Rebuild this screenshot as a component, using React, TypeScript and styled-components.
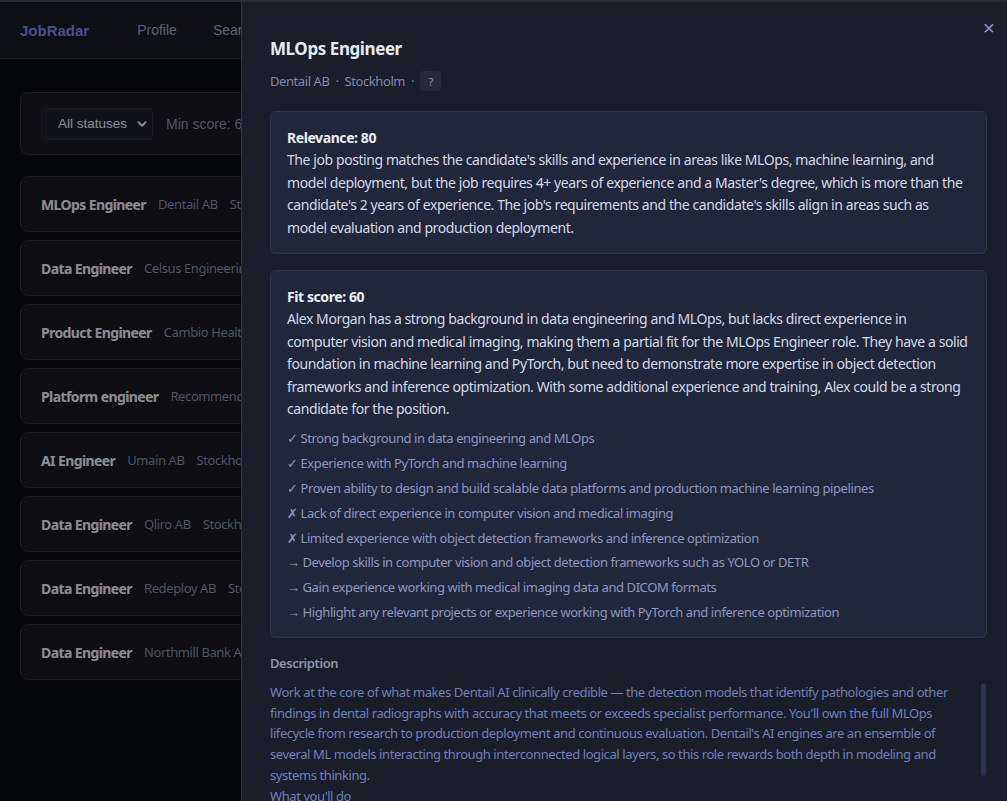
import { createGlobalStyle } from 'styled-components';
import styled from 'styled-components';

const GlobalStyle = createGlobalStyle`
	html {
		border-top: 2px solid #2b2c30;
	}
	body {
		margin: 0;
		background: #0b0c10;
		font-family: 'Noto Sans', 'Open Sans', sans-serif;
		overflow: hidden;
	}
	* {
		box-sizing: border-box;
	}
`;

const Page = styled.div`
	min-height: 799px;
	background: #0b0c10;
`;

const NavBar = styled.nav`
	display: flex;
	align-items: center;
	height: 57px;
	padding: 0 20px;
	background: #171922;
	border-bottom: 1px solid #2f3249;
	font-family: 'Liberation Sans', Arial, sans-serif;
`;

const Logo = styled.div`
	font-size: 15px;
	font-weight: 700;
	color: #7d84ea;
	margin-right: 48px;
`;

const NavLink = styled.a`
	font-size: 14px;
	color: #9aa0ca;
	margin-right: 36px;
`;

const Main = styled.main`
	padding: 33px 20px;
`;

const FilterBar = styled.div`
	display: flex;
	align-items: center;
	gap: 13px;
	height: 63px;
	padding: 0 20px;
	background: #16171f;
	border: 1px solid #2d3043;
	border-radius: 8px;
	margin-bottom: 21px;
	font-family: 'Liberation Sans', Arial, sans-serif;
`;

const Select = styled.div`
	display: flex;
	align-items: center;
	justify-content: space-between;
	width: 112px;
	height: 32px;
	padding: 0 3px 0 16px;
	background: #1c1f2a;
	border: 1px solid #282b3a;
	border-radius: 4px;
	font-size: 13.5px;
	color: #e4e8f5;
`;

const FilterLabel = styled.span`
	font-size: 14px;
	color: #858eb1;
	white-space: nowrap;
`;

const JobList = styled.div`
	display: flex;
	flex-direction: column;
	gap: 8px;
`;

const JobCard = styled.div`
	display: flex;
	align-items: center;
	gap: 12px;
	height: 56px;
	padding: 0 20px;
	background: #16171f;
	border: 1px solid #2a2c3e;
	border-radius: 8px;
	white-space: nowrap;
	letter-spacing: -0.4px;
`;

const JobTitle = styled.span`
	font-size: 14px;
	font-weight: 700;
	letter-spacing: -0.6px;
	color: #e8eaf5;
`;

const JobMeta = styled.span`
	font-size: 13px;
	color: #818cae;
`;

const Backdrop = styled.div`
	position: fixed;
	top: 2px;
	left: 0;
	right: 0;
	bottom: 0;
	background: rgba(0, 0, 0, 0.4);
`;

const Drawer = styled.aside`
	position: fixed;
	top: 2px;
	right: 0;
	bottom: 0;
	width: 766px;
	background: #1b1d2a;
	border-left: 1px solid #2d3256;
	padding: 36px 20px 0 28px;
	overflow: hidden;
	letter-spacing: -0.42px;
`;

const CloseButton = styled.button`
	position: absolute;
	top: 16px;
	right: 12px;
	background: none;
	border: none;
	padding: 0;
	font-size: 21px;
	line-height: 20px;
	color: #8c9ac4;
	cursor: pointer;
	font-family: 'Liberation Sans', Arial, sans-serif;
`;

const DrawerTitle = styled.h2`
	margin: 0;
	font-size: 17px;
	line-height: 22px;
	font-weight: 700;
	color: #e8eaf2;
`;

const Subtitle = styled.div`
	display: flex;
	align-items: center;
	gap: 6px;
	margin-top: 11px;
	font-size: 13px;
	color: #7d89b0;
`;

const Badge = styled.span`
	display: inline-flex;
	align-items: center;
	justify-content: center;
	width: 21px;
	height: 20px;
	border-radius: 4px;
	background: #262a38;
	font-size: 11px;
	color: #8a93b8;
`;

const Card = styled.section<{ $top: number }>`
	margin-top: ${(p) => p.$top}px;
	padding: 15px 16px 14px;
	background: #22263a;
	border: 1px solid #2e3350;
	border-radius: 6px;
	font-size: 14px;
	line-height: 22.4px;
	color: #d4d8e8;
`;

const CardHeading = styled.div`
	font-weight: 700;
	color: #eceef5;
`;

const Points = styled.ul`
	list-style: none;
	margin: 8px 0 0;
	padding: 0;
	font-size: 13px;
	line-height: 20.8px;
	color: #8c96c0;
`;

const Point = styled.li`
	margin-bottom: 4px;
	&:last-child {
		margin-bottom: 0;
	}
`;

const SectionTitle = styled.h3`
	margin: 14px 0 0;
	font-size: 13px;
	line-height: 22px;
	font-weight: 600;
	color: #8b93a8;
`;

const DescriptionBox = styled.div`
	position: relative;
	margin-top: 8px;
`;

const Description = styled.div`
	height: 220px;
	overflow: hidden;
	white-space: pre-wrap;
	font-size: 13px;
	line-height: 20.8px;
	color: #6e80ba;
	padding-right: 16px;
`;

// headless screenshots hide native scrollbars, so the thumb is drawn
const ScrollThumb = styled.div`
	position: absolute;
	top: 1px;
	right: 1px;
	width: 5px;
	height: 93px;
	border-radius: 3px;
	background: #2f3352;
`;

const jobs = [
	{ title: 'MLOps Engineer', company: 'Dentail AB', city: 'Stockholm' },
	{ title: 'Data Engineer', company: 'Celsus Engineering', city: 'Stockholm' },
	{ title: 'Product Engineer', company: 'Cambio Healthcare', city: 'Stockholm' },
	{ title: 'Platform engineer', company: 'Recommended', city: 'Stockholm' },
	{ title: 'AI Engineer', company: 'Umain AB', city: 'Stockholm' },
	{ title: 'Data Engineer', company: 'Qliro AB', city: 'Stockholm' },
	{ title: 'Data Engineer', company: 'Redeploy AB', city: 'Stockholm' },
	{ title: 'Data Engineer', company: 'Northmill Bank AB', city: 'Stockholm' },
];

const points = [
	'✓ Strong background in data engineering and MLOps',
	'✓ Experience with PyTorch and machine learning',
	'✓ Proven ability to design and build scalable data platforms and production machine learning pipelines',
	'✗ Lack of direct experience in computer vision and medical imaging',
	'✗ Limited experience with object detection frameworks and inference optimization',
	'→ Develop skills in computer vision and object detection frameworks such as YOLO or DETR',
	'→ Gain experience working with medical imaging data and DICOM formats',
	'→ Highlight any relevant projects or experience working with PyTorch and inference optimization',
];

const descriptionText = `Work at the core of what makes Dentail AI clinically credible — the detection models that identify pathologies and other findings in dental radiographs with accuracy that meets or exceeds specialist performance. You'll own the full MLOps lifecycle from research to production deployment and continuous evaluation. Dentail's AI engines are an ensemble of several ML models interacting through interconnected logical layers, so this role rewards both depth in modeling and systems thinking.
What you'll do
Design, train and evaluate object detection and segmentation models on large sets of dental radiographs.
Build and maintain the training, evaluation and deployment pipelines that take models from experiment to production.
Optimize inference for latency and cost across cloud and on-premise environments.
Set up monitoring and continuous evaluation so model quality is tracked against clinical ground truth.`;

export default function App() {
	return (
		<>
			<GlobalStyle />
			<Page>
				<NavBar>
					<Logo>JobRadar</Logo>
					<NavLink>Profile</NavLink>
					<NavLink>Search</NavLink>
					<NavLink>Jobs</NavLink>
				</NavBar>
				<Main>
					<FilterBar>
						<Select>
							All statuses
							<svg width="14" height="14" viewBox="0 0 24 24" fill="none" stroke="#e4e8f5" strokeWidth="3.2" strokeLinecap="round" strokeLinejoin="round">
								<path d="M6 9l6 6 6-6" />
							</svg>
						</Select>
						<FilterLabel>Min score: 65</FilterLabel>
					</FilterBar>
					<JobList>
						{jobs.map((job, index) => (
							<JobCard key={index}>
								<JobTitle>{job.title}</JobTitle>
								<JobMeta>{job.company}</JobMeta>
								<JobMeta>{job.city}</JobMeta>
							</JobCard>
						))}
					</JobList>
				</Main>
			</Page>

			<Backdrop />
			<Drawer>
				<CloseButton>×</CloseButton>
				<DrawerTitle>MLOps Engineer</DrawerTitle>
				<Subtitle>
					<span>Dentail AB</span>
					<span>·</span>
					<span>Stockholm</span>
					<span>·</span>
					<Badge>?</Badge>
				</Subtitle>

				<Card $top={20}>
					<CardHeading>Relevance: 80</CardHeading>
					The job posting matches the candidate's skills and experience in areas like MLOps, machine learning, and model deployment, but the job requires 4+ years of experience and a Master's degree, which is more than the candidate's 2 years of experience. The job's requirements and the candidate's skills align in areas such as model evaluation and production deployment.
				</Card>

				<Card $top={16}>
					<CardHeading>Fit score: 60</CardHeading>
					Alex Morgan has a strong background in data engineering and MLOps, but lacks direct experience in computer vision and medical imaging, making them a partial fit for the MLOps Engineer role. They have a solid foundation in machine learning and PyTorch, but need to demonstrate more expertise in object detection frameworks and inference optimization. With some additional experience and training, Alex could be a strong candidate for the position.
					<Points>
						{points.map((p, i) => (
							<Point key={i}>{p}</Point>
						))}
					</Points>
				</Card>

				<SectionTitle>Description</SectionTitle>
				<DescriptionBox>
					<Description>{descriptionText}</Description>
					<ScrollThumb />
				</DescriptionBox>
			</Drawer>
		</>
	);
}
